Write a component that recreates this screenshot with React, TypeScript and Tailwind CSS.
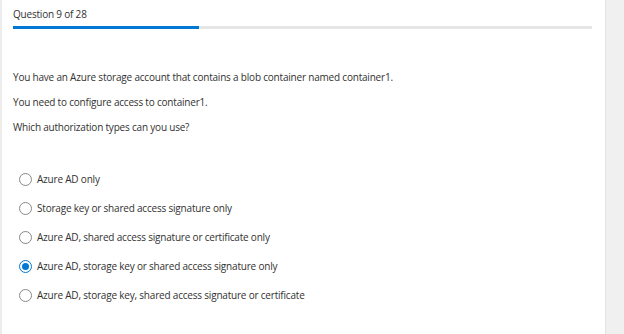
const options = [
  "Azure AD only",
  "Storage key or shared access signature only",
  "Azure AD, shared access signature or certificate only",
  "Azure AD, storage key or shared access signature only",
  "Azure AD, storage key, shared access signature or certificate",
];

export default function App() {
  const selected = 3;
  return (
    <div className="flex h-[334px] w-[624px] bg-white font-['Open_Sans',sans-serif] text-[10px] tracking-[-0.2px] text-[#323130]">
      <div className="flex-1 border-l-2 border-[#ececec] pl-[11px] pr-[13px]">
        <div className="pt-[6px] leading-[16px]">Question 9 of 28</div>
        <div className="mt-[4px] h-[3px] w-full bg-[#e6e6e6]">
          <div className="h-full w-[186px] bg-[#0078d4]" />
        </div>
        <div className="mt-[40px] flex flex-col gap-[9px] leading-[16px]">
          <p>You have an Azure storage account that contains a blob container named container1.</p>
          <p>You need to configure access to container1.</p>
          <p>Which authorization types can you use?</p>
        </div>
        <div className="mt-[36px] flex flex-col gap-[13px]">
          {options.map((o, i) => (
            <label key={i} className="flex items-center gap-[5px] pl-[6px] leading-[16px]">
              <span
                className={
                  "flex h-[13px] w-[13px] items-center justify-center rounded-full border " +
                  (i === selected ? "border-[#0078d4]" : "border-[#8a8886]")
                }
              >
                {i === selected && <span className="h-[7px] w-[7px] rounded-full bg-[#0078d4]" />}
              </span>
              {o}
            </label>
          ))}
        </div>
      </div>
      <div className="w-[19px] border-l border-[#e3e3e3] bg-[#f0f0f0]" />
    </div>
  );
}
